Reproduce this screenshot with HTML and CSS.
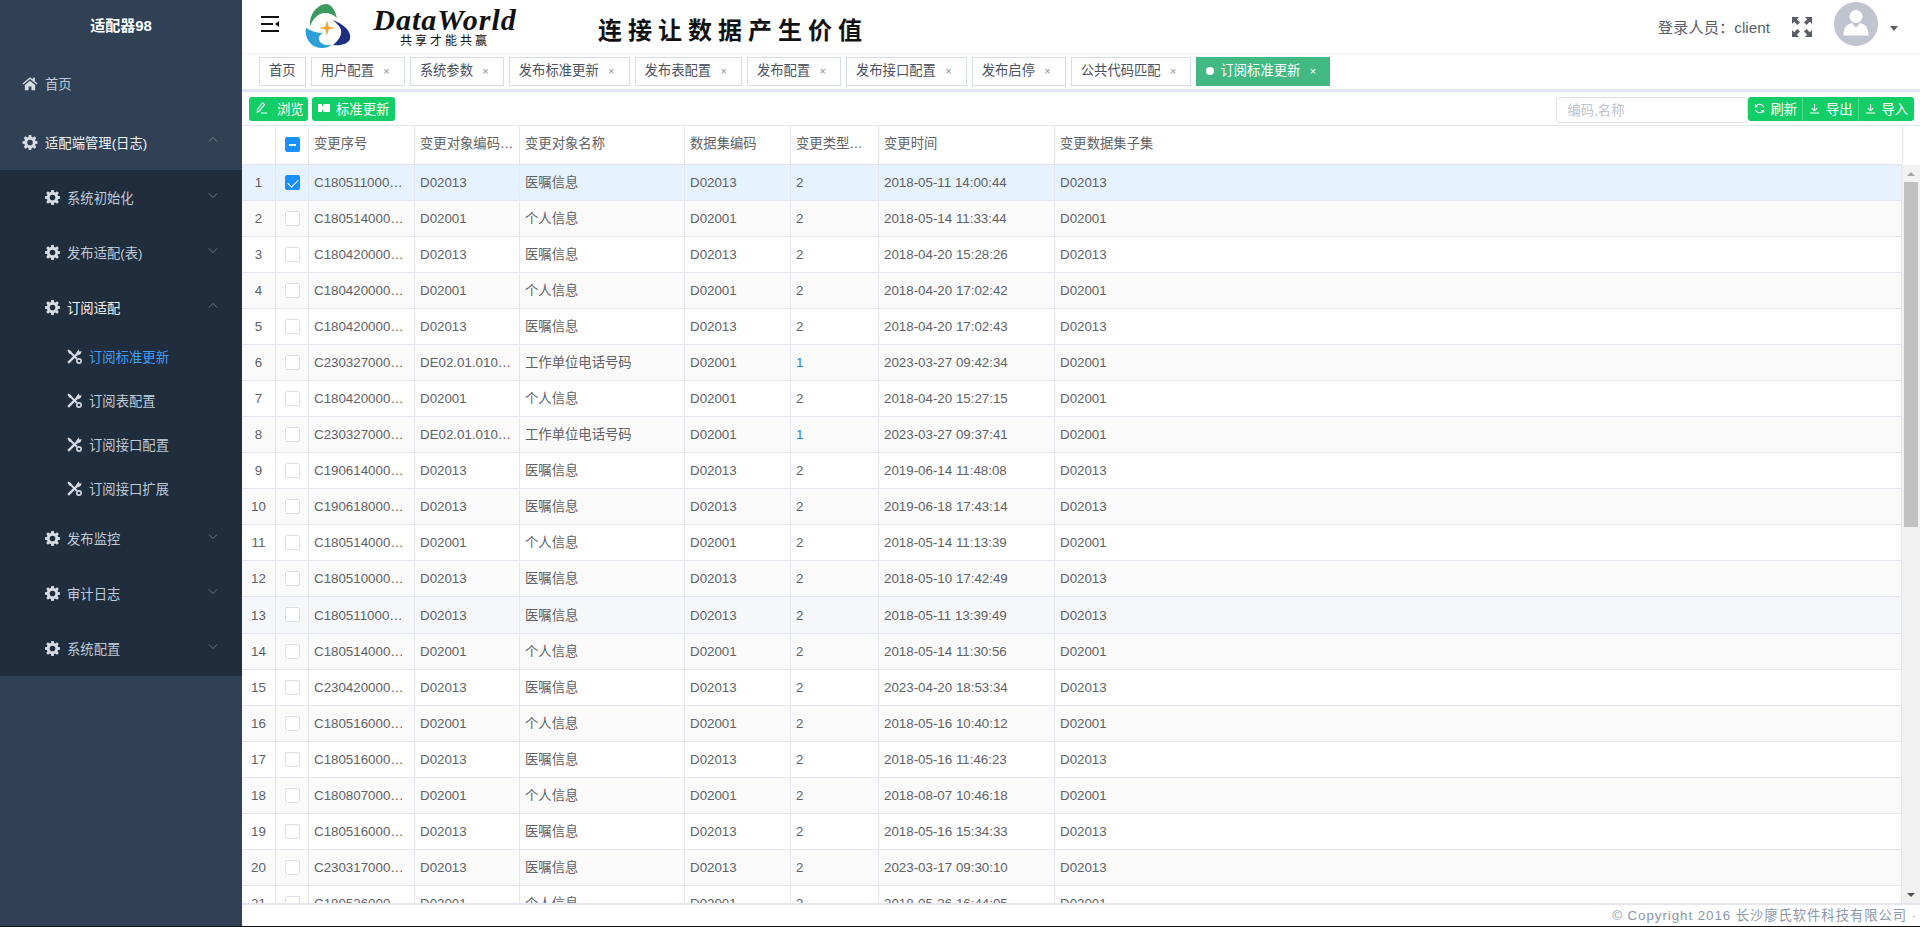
FILE: index.html
```html
<!DOCTYPE html>
<html lang="zh-CN">
<head>
    <meta charset="UTF-8">
    <title>适配器98</title>
    <link rel="stylesheet" href="styles.css">
</head>
<body>

<svg class="icon-defs" width="0" height="0">
    <symbol id="i-gear" viewBox="0 0 16 16">
        <path fill-rule="evenodd" d="M6.7 0h2.6l.4 2.2 1.3.55 1.85-1.3 1.85 1.85-1.3 1.85.55 1.3L16 6.7v2.6l-2.05.4-.55 1.3 1.3 1.85-1.85 1.85-1.85-1.3-1.3.55L9.3 16H6.7l-.4-2.05-1.3-.55-1.85 1.3-1.85-1.85 1.3-1.85-.55-1.3L0 9.3V6.7l2.05-.4.55-1.3-1.3-1.85L3.15 1.3 5 2.6l1.3-.55zM8 5a3 3 0 1 0 0 6 3 3 0 0 0 0-6z"/>
    </symbol>
    <symbol id="i-tools" viewBox="0 0 16 16">
        <path d="M2 2 10.5 10.5" fill="none" stroke="#d8dce2" stroke-width="2.2"/>
        <path d="M.5 1.500 1.500.5l3 1.800.3 1.700-1 1-1.600-.3z" fill="#d8dce2"/>
        <path d="M1.200 14.800 12 4" fill="none" stroke="#d8dce2" stroke-width="2.6"/>
        <path d="M10 4 12.500.3l.6 2.300 2.600-.3-1 2.700-3 1.800z" fill="#d8dce2"/>
        <circle cx="12.800" cy="12.800" r="2.300" fill="none" stroke="#d8dce2" stroke-width="1.700"/>
    </symbol>
    <symbol id="i-chevron" viewBox="0 0 12 8">
        <path d="M1 1.500 6 6.500l5-5" fill="none" stroke="currentColor" stroke-width="1"/>
    </symbol>
    <symbol id="i-download" viewBox="0 0 12 12">
        <path d="M6 1v7M3 5.500 6 8.500l3-3M1 11h10" fill="none" stroke="#fff" stroke-width="1.100"/>
    </symbol>
</svg>

<div class="app">
    <aside class="sidebar">
        <div class="brand">适配器98</div>
        <nav class="menu">
            <a class="menu-top menu-home"><svg class="menu-icon" viewBox="0 0 18 16"><path d="M9 1 .5 8l1 1.200L9 3l7.500 6.200 1-1.200L14.500 5.500V1.500h-2.300v2L9 1zM3.200 9.700V15.500h4.200v-4h3.200v4h4.200V9.700L9 5z"/></svg><span>首页</span></a>
            <a class="menu-top menu-open"><svg class="menu-icon"><use href="#i-gear"/></svg><span>适配端管理(日志)</span><svg class="chev chev-up"><use href="#i-chevron"/></svg></a>
            <div class="submenu">
                <a class="menu-sub"><svg class="menu-icon"><use href="#i-gear"/></svg><span>系统初始化</span><svg class="chev"><use href="#i-chevron"/></svg></a>
                <a class="menu-sub"><svg class="menu-icon"><use href="#i-gear"/></svg><span>发布适配(表)</span><svg class="chev"><use href="#i-chevron"/></svg></a>
                <a class="menu-sub menu-open"><svg class="menu-icon"><use href="#i-gear"/></svg><span>订阅适配</span><svg class="chev chev-up"><use href="#i-chevron"/></svg></a>
                <div class="leaf-list">
                    <a class="menu-leaf leaf-active"><svg class="menu-icon"><use href="#i-tools"/></svg><span>订阅标准更新</span></a>
                    <a class="menu-leaf"><svg class="menu-icon"><use href="#i-tools"/></svg><span>订阅表配置</span></a>
                    <a class="menu-leaf"><svg class="menu-icon"><use href="#i-tools"/></svg><span>订阅接口配置</span></a>
                    <a class="menu-leaf"><svg class="menu-icon"><use href="#i-tools"/></svg><span>订阅接口扩展</span></a>
                </div>
                <a class="menu-sub"><svg class="menu-icon"><use href="#i-gear"/></svg><span>发布监控</span><svg class="chev"><use href="#i-chevron"/></svg></a>
                <a class="menu-sub"><svg class="menu-icon"><use href="#i-gear"/></svg><span>审计日志</span><svg class="chev"><use href="#i-chevron"/></svg></a>
                <a class="menu-sub"><svg class="menu-icon"><use href="#i-gear"/></svg><span>系统配置</span><svg class="chev"><use href="#i-chevron"/></svg></a>
            </div>
        </nav>
    </aside>

    <main class="main">
        <header class="topbar">
            <svg class="hamburger" viewBox="0 0 18 16"><path d="M0 1h18M0 8h12M0 15h18" stroke="#111" stroke-width="1.800" fill="none"/><path d="M18 5v6l-4-3z" fill="#111"/></svg>
            <svg class="logo" viewBox="0 0 47 46">
                <path d="M5 23C4 13 10 3 20 1c6-1 10 6 12 14-3-3-7-5-12-5-7 0-12 6-15 13z" fill="#3c9a5f"/>
                <path d="M1 25c-2 10 5 20 16 20 4 0 7-1 10-3-8 1-14-2-13-8 .5-2 2-3 4-4-6 0-12-2-17-5z" fill="#2a9fd8"/>
                <path d="M28 17c10 4 19 11 17 19-2 5-9 7-17 6 5-4 9-9 8-15-1-4-5-7-8-10z" fill="#1d2f80"/>
                <path d="M22 17l1.600 6.400 6.400 1.600-6.400 1.600L22 33l-1.600-6.400-6.400-1.600 6.400-1.600z" fill="#f0a92e"/>
            </svg>
            <div class="wordmark">
                <span class="wordmark-en">DataWorld</span>
                <span class="wordmark-cn">共享才能共赢</span>
            </div>
            <div class="slogan">连接让数据产生价值</div>
            <div class="topbar-right">
                <span class="login-user">登录人员：client</span>
                <svg class="fullscreen" viewBox="0 0 20 20"><path d="M0 0h7L4.800 2.200 8 5.400 5.400 8 2.200 4.800 0 7zM20 0v7l-2.200-2.200L14.600 8 12 5.400l3.200-3.200L13 0zM0 20v-7l2.200 2.200L5.400 12 8 14.600l-3.200 3.200L7 20zM20 20h-7l2.200-2.200L12 14.600l2.600-2.600 3.200 3.200L20 13z" fill="#5a5e66"/></svg>
                <div class="avatar"><svg viewBox="0 0 44 44"><circle cx="22" cy="14.500" r="6.500" fill="#fff"/><path d="M9.500 33.500c0-8 3-11 8-12.500l4.500 4.500 4.500-4.500c5 1.500 8 4.500 8 12.500z" fill="#fff"/></svg></div>
                <span class="caret"></span>
            </div>
        </header>

        <div class="tabs">
            <a class="tab">首页</a>
            <a class="tab">用户配置<i>×</i></a>
            <a class="tab">系统参数<i>×</i></a>
            <a class="tab">发布标准更新<i>×</i></a>
            <a class="tab">发布表配置<i>×</i></a>
            <a class="tab">发布配置<i>×</i></a>
            <a class="tab">发布接口配置<i>×</i></a>
            <a class="tab">发布启停<i>×</i></a>
            <a class="tab">公共代码匹配<i>×</i></a>
            <a class="tab tab-active"><b></b>订阅标准更新<i>×</i></a>
        </div>

        <section class="content">
            <div class="toolbar">
                <button class="btn btn-view"><svg viewBox="0 0 12 12"><path d="M7.500 1 9.500 2.500 4.500 9 2.300 10l.2-2.500zM6 11h6" fill="none" stroke="#fff" stroke-width="1.100"/></svg>浏览</button>
                <button class="btn btn-update"><svg viewBox="0 0 12 10"><path d="M0 1h4v2h1V1h7v8H5V7H4v2H0z" fill="#fff"/></svg>标准更新</button>
                <input class="search" type="text" placeholder="编码,名称">
                <div class="btn-group">
                    <button class="btn"><svg viewBox="0 0 12 12"><path d="M10.500 4.500A4.800 4.800 0 0 0 2 3.500M1.500 7.500A4.800 4.800 0 0 0 10 8.500" fill="none" stroke="#fff" stroke-width="1.300"/><path d="M1 1v3.500h3.500zM11 11V7.500H7.500z" fill="#fff"/></svg>刷新</button>
                    <button class="btn"><svg><use href="#i-download"/></svg>导出</button>
                    <button class="btn"><svg><use href="#i-download"/></svg>导入</button>
                </div>
            </div>

            <div class="grid-head">
                <table class="grid">
                    <colgroup><col class="c-no"><col class="c-check"><col class="c-seq"><col class="c-code"><col class="c-name"><col class="c-set"><col class="c-type"><col class="c-time"><col class="c-sub"></colgroup>
                    <tr>
                        <th></th>
                        <th class="cell-check"><span class="checkbox is-mixed"></span></th>
                        <th>变更序号</th>
                        <th>变更对象编码…</th>
                        <th>变更对象名称</th>
                        <th>数据集编码</th>
                        <th>变更类型…</th>
                        <th>变更时间</th>
                        <th>变更数据集子集</th>
                    </tr>
                </table>
            </div>

            <div class="grid-wrap">
                <div class="grid-body">
                    <table class="grid">
                        <colgroup><col class="c-no"><col class="c-check"><col class="c-seq"><col class="c-code"><col class="c-name"><col class="c-set"><col class="c-type"><col class="c-time"><col class="c-sub"></colgroup>
                        <tr class="row-selected"><td class="cell-no">1</td><td class="cell-check"><span class="checkbox is-checked"></span></td><td>C180511000…</td><td>D02013</td><td class="cell-cn">医嘱信息</td><td>D02013</td><td>2</td><td>2018-05-11 14:00:44</td><td>D02013</td></tr>
                        <tr><td class="cell-no">2</td><td class="cell-check"><span class="checkbox"></span></td><td>C180514000…</td><td>D02001</td><td class="cell-cn">个人信息</td><td>D02001</td><td>2</td><td>2018-05-14 11:33:44</td><td>D02001</td></tr>
                        <tr><td class="cell-no">3</td><td class="cell-check"><span class="checkbox"></span></td><td>C180420000…</td><td>D02013</td><td class="cell-cn">医嘱信息</td><td>D02013</td><td>2</td><td>2018-04-20 15:28:26</td><td>D02013</td></tr>
                        <tr><td class="cell-no">4</td><td class="cell-check"><span class="checkbox"></span></td><td>C180420000…</td><td>D02001</td><td class="cell-cn">个人信息</td><td>D02001</td><td>2</td><td>2018-04-20 17:02:42</td><td>D02001</td></tr>
                        <tr><td class="cell-no">5</td><td class="cell-check"><span class="checkbox"></span></td><td>C180420000…</td><td>D02013</td><td class="cell-cn">医嘱信息</td><td>D02013</td><td>2</td><td>2018-04-20 17:02:43</td><td>D02013</td></tr>
                        <tr><td class="cell-no">6</td><td class="cell-check"><span class="checkbox"></span></td><td>C230327000…</td><td>DE02.01.010…</td><td class="cell-cn">工作单位电话号码</td><td>D02001</td><td class="type-new">1</td><td>2023-03-27 09:42:34</td><td>D02001</td></tr>
                        <tr><td class="cell-no">7</td><td class="cell-check"><span class="checkbox"></span></td><td>C180420000…</td><td>D02001</td><td class="cell-cn">个人信息</td><td>D02001</td><td>2</td><td>2018-04-20 15:27:15</td><td>D02001</td></tr>
                        <tr><td class="cell-no">8</td><td class="cell-check"><span class="checkbox"></span></td><td>C230327000…</td><td>DE02.01.010…</td><td class="cell-cn">工作单位电话号码</td><td>D02001</td><td class="type-new">1</td><td>2023-03-27 09:37:41</td><td>D02001</td></tr>
                        <tr><td class="cell-no">9</td><td class="cell-check"><span class="checkbox"></span></td><td>C190614000…</td><td>D02013</td><td class="cell-cn">医嘱信息</td><td>D02013</td><td>2</td><td>2019-06-14 11:48:08</td><td>D02013</td></tr>
                        <tr><td class="cell-no">10</td><td class="cell-check"><span class="checkbox"></span></td><td>C190618000…</td><td>D02013</td><td class="cell-cn">医嘱信息</td><td>D02013</td><td>2</td><td>2019-06-18 17:43:14</td><td>D02013</td></tr>
                        <tr><td class="cell-no">11</td><td class="cell-check"><span class="checkbox"></span></td><td>C180514000…</td><td>D02001</td><td class="cell-cn">个人信息</td><td>D02001</td><td>2</td><td>2018-05-14 11:13:39</td><td>D02001</td></tr>
                        <tr><td class="cell-no">12</td><td class="cell-check"><span class="checkbox"></span></td><td>C180510000…</td><td>D02013</td><td class="cell-cn">医嘱信息</td><td>D02013</td><td>2</td><td>2018-05-10 17:42:49</td><td>D02013</td></tr>
                        <tr class="row-hover"><td class="cell-no">13</td><td class="cell-check"><span class="checkbox"></span></td><td>C180511000…</td><td>D02013</td><td class="cell-cn">医嘱信息</td><td>D02013</td><td>2</td><td>2018-05-11 13:39:49</td><td>D02013</td></tr>
                        <tr><td class="cell-no">14</td><td class="cell-check"><span class="checkbox"></span></td><td>C180514000…</td><td>D02001</td><td class="cell-cn">个人信息</td><td>D02001</td><td>2</td><td>2018-05-14 11:30:56</td><td>D02001</td></tr>
                        <tr><td class="cell-no">15</td><td class="cell-check"><span class="checkbox"></span></td><td>C230420000…</td><td>D02013</td><td class="cell-cn">医嘱信息</td><td>D02013</td><td>2</td><td>2023-04-20 18:53:34</td><td>D02013</td></tr>
                        <tr><td class="cell-no">16</td><td class="cell-check"><span class="checkbox"></span></td><td>C180516000…</td><td>D02001</td><td class="cell-cn">个人信息</td><td>D02001</td><td>2</td><td>2018-05-16 10:40:12</td><td>D02001</td></tr>
                        <tr><td class="cell-no">17</td><td class="cell-check"><span class="checkbox"></span></td><td>C180516000…</td><td>D02013</td><td class="cell-cn">医嘱信息</td><td>D02013</td><td>2</td><td>2018-05-16 11:46:23</td><td>D02013</td></tr>
                        <tr><td class="cell-no">18</td><td class="cell-check"><span class="checkbox"></span></td><td>C180807000…</td><td>D02001</td><td class="cell-cn">个人信息</td><td>D02001</td><td>2</td><td>2018-08-07 10:46:18</td><td>D02001</td></tr>
                        <tr><td class="cell-no">19</td><td class="cell-check"><span class="checkbox"></span></td><td>C180516000…</td><td>D02013</td><td class="cell-cn">医嘱信息</td><td>D02013</td><td>2</td><td>2018-05-16 15:34:33</td><td>D02013</td></tr>
                        <tr><td class="cell-no">20</td><td class="cell-check"><span class="checkbox"></span></td><td>C230317000…</td><td>D02013</td><td class="cell-cn">医嘱信息</td><td>D02013</td><td>2</td><td>2023-03-17 09:30:10</td><td>D02013</td></tr>
                        <tr><td class="cell-no">21</td><td class="cell-check"><span class="checkbox"></span></td><td>C180526000…</td><td>D02001</td><td class="cell-cn">个人信息</td><td>D02001</td><td>2</td><td>2018-05-26 16:44:05</td><td>D02001</td></tr>
                    </table>
                </div>
                <div class="scrollbar">
                    <span class="arrow arrow-up"></span>
                    <span class="thumb"></span>
                    <span class="arrow arrow-down"></span>
                </div>
            </div>
        </section>

        <footer class="footer">© Copyright 2016 长沙廖氏软件科技有限公司 ·</footer>
    </main>
</div>

</body>
</html>
```

FILE: styles.css
```css
* {
    box-sizing: border-box;
}
html, body {
    height: 100%;
}
body {
    margin: 0;
    font-family: "Liberation Sans", Arial, "Noto Sans CJK SC", sans-serif;
    font-size: 13.33px;
    color: #606266;
    background-color: #111;
    overflow: hidden;
}
.icon-defs {
    position: absolute;
}
.app {
    display: flex;
    height: 926px;
}

/* sidebar */
.sidebar {
    width: 242px;
    flex: none;
    background-color: #304156;
    color: #bfcbd9;
}
.brand {
    height: 55px;
    line-height: 51px;
    text-align: center;
    color: #fff;
    font-size: 15px;
    font-weight: bold;
}
.menu a {
    display: flex;
    align-items: center;
    position: relative;
}
.menu-top {
    height: 57px;
    padding: 1px 0 0 22px;
}
.menu-home {
    height: 58px;
    padding: 0 0 2px 22px;
}
.menu-sub {
    height: 55px;
    padding-left: 45px;
}
.menu-leaf {
    height: 44px;
    padding: 0 0 2px 67px;
}
.menu-icon {
    width: 15px;
    height: 15px;
    margin-right: 7px;
    fill: #d8dce2;
    flex: none;
}
.menu-top .menu-icon {
    width: 16px;
}
.menu-open {
    color: #f4f4f5;
}
.submenu {
    background-color: #1f2d3d;
}
.leaf-active {
    color: #409eff;
}
.chev {
    position: absolute;
    right: 24px;
    top: 50%;
    width: 10px;
    height: 7px;
    margin-top: -6px;
    color: #7f8a98;
}
.chev-up {
    transform: rotate(180deg);
}

/* top bar */
.main {
    flex: 1;
    min-width: 0;
    display: flex;
    flex-direction: column;
    background-color: #fff;
}
.topbar {
    height: 53px;
    flex: none;
    display: flex;
    align-items: center;
    padding-left: 19px;
    box-shadow: 0 1px 4px rgba(0, 21, 41, 0.08);
    position: relative;
}
.hamburger {
    width: 18px;
    height: 16px;
    margin: 0 26px 6px 0;
}
.logo {
    width: 47px;
    height: 46px;
    margin: 0 22px 2px 0;
}
.wordmark {
    display: flex;
    flex-direction: column;
    align-items: center;
    width: 142px;
    color: #111;
    margin-right: 82px;
}
.wordmark-en {
    font-family: "Liberation Serif", serif;
    font-style: italic;
    font-weight: bold;
    font-size: 30px;
    letter-spacing: 1px;
    line-height: 28px;
    white-space: nowrap;
}
.wordmark-cn {
    font-size: 12px;
    line-height: 14px;
    letter-spacing: 3px;
}
.slogan {
    font-family: "Noto Sans CJK SC", sans-serif;
    font-size: 24px;
    font-weight: bold;
    line-height: 30px;
    letter-spacing: 6px;
    color: #111;
    margin-top: 5px;
}
.topbar-right {
    margin-left: auto;
    display: flex;
    align-items: center;
    padding-right: 22px;
}
.login-user {
    font-size: 15.3px;
    color: #5a5e66;
    margin: 0 22px 2px 0;
}
.fullscreen {
    width: 20px;
    height: 20px;
    margin-right: 22px;
}
.avatar {
    width: 44px;
    height: 44px;
    border-radius: 50%;
    background-color: #c0c4cf;
    margin: 0 12px 5px 0;
}
.avatar svg {
    display: block;
}
.caret {
    border: 4px solid transparent;
    border-top: 5px solid #5a5e66;
    border-bottom: 0;
    width: 0;
    height: 0;
    margin-top: 4px;
}

/* tabs */
.tabs {
    height: 39px;
    flex: none;
    display: flex;
    align-items: flex-start;
    gap: 5px;
    padding: 4px 0 0 17px;
    border-bottom: 3px solid #e2e6f0;
}
.tab {
    height: 29px;
    line-height: 26px;
    border: 1px solid #d8dce5;
    padding: 0 9px;
    color: #495060;
    white-space: nowrap;
}
.tab i {
    display: inline-block;
    width: 9px;
    text-align: center;
    font-style: normal;
    font-size: 11px;
    color: #8a8f99;
    margin: 0 3.75px 0 8px;
}
.tab-active {
    background-color: #42b983;
    border-color: #42b983;
    color: #fff;
}
.tab-active b {
    display: inline-block;
    width: 8px;
    height: 8px;
    border-radius: 50%;
    background-color: #fff;
    margin-right: 6px;
}
.tab-active i {
    color: #fff;
    margin-right: 3px;
}

/* toolbar */
.content {
    flex: 1;
    min-height: 0;
    display: flex;
    flex-direction: column;
    border-bottom: 2px solid #e4e7ed;
}
.toolbar {
    height: 33px;
    flex: none;
    display: flex;
    align-items: flex-start;
    padding: 5px 6px 0 7px;
    gap: 4px;
}
.btn {
    height: 24px;
    border: 0;
    border-radius: 3px;
    background-color: #13ce66;
    color: #fff;
    font-family: inherit;
    font-size: 13.33px;
    padding: 0 6px 2px;
    display: inline-flex;
    align-items: center;
    white-space: nowrap;
}
.btn svg {
    width: 12px;
    height: 12px;
    flex: none;
}
.btn-view {
    width: 59px;
    gap: 10px;
}
.btn-update {
    width: 83px;
    gap: 6px;
}
.search {
    width: 192px;
    height: 26px;
    margin-left: auto;
    margin-right: -4px;
    border: 1px solid #dcdfe6;
    border-radius: 4px;
    padding: 0 11px;
    font-family: inherit;
    font-size: 13.33px;
    outline: none;
}
.search::placeholder {
    color: #c0c4cc;
}
.btn-group {
    display: flex;
}
.btn-group .btn {
    border-radius: 0;
    border-right: 1px solid #4fdd8e;
    width: 55.5px;
    gap: 6px;
}
.btn-group .btn svg {
    width: 11px;
    height: 11px;
}
.btn-group .btn:first-child {
    border-radius: 3px 0 0 3px;
}
.btn-group .btn:last-child {
    border-radius: 0 3px 3px 0;
    border-right: 0;
}

/* table */
.grid-head {
    flex: none;
    border-top: 1px solid #e4e7ed;
    padding-right: 17px;
}
.grid {
    width: 100%;
    table-layout: fixed;
    border-collapse: separate;
    border-spacing: 0;
    font-size: 13.33px;
}
.c-no { width: 34px; }
.c-check { width: 33px; }
.c-seq { width: 106px; }
.c-code { width: 105px; }
.c-name { width: 165px; }
.c-set { width: 106px; }
.c-type { width: 88px; }
.c-time { width: 176px; }
.grid th, .grid td {
    border-right: 1px solid #e4e7ed;
    border-bottom: 1px solid #e4e7ed;
    padding: 0 5px;
    text-align: left;
    font-weight: normal;
    white-space: nowrap;
    overflow: hidden;
    color: #606266;
}
.grid th {
    height: 39px;
    padding-bottom: 5px;
}
.grid td {
    height: 36px;
}
.grid .cell-cn {
    padding-bottom: 2px;
}
.grid .cell-no {
    text-align: center;
}
.grid .cell-check {
    padding: 0 0 1px;
}
.grid .type-new {
    color: #2d7fc9;
}
.grid tr:nth-child(even) td {
    background-color: #fafafa;
}
.grid .row-selected td {
    background-color: #e6f2fd;
}
.grid .row-hover td {
    height: 37px;
    background-color: #f5f7fa;
}
.checkbox {
    display: block;
    width: 15px;
    height: 15px;
    margin: 0 auto;
    border: 1px solid #dcdfe6;
    border-radius: 2px;
    background-color: #fff;
    position: relative;
}
.checkbox.is-mixed, .checkbox.is-checked {
    background-color: #1890ff;
    border-color: #1890ff;
}
.checkbox.is-mixed::after {
    content: "";
    position: absolute;
    left: 3px;
    top: 6px;
    width: 7px;
    height: 1.5px;
    background-color: #fff;
}
.checkbox.is-checked::after {
    content: "";
    position: absolute;
    left: 4px;
    top: 1px;
    width: 5px;
    height: 9px;
    border: 1px solid #fff;
    border-width: 0 1px 1px 0;
    transform: rotate(45deg);
}
.grid-wrap {
    flex: 1;
    min-height: 0;
    display: flex;
}
.grid-body {
    flex: 1;
    min-width: 0;
    overflow: hidden;
}
.scrollbar {
    width: 18px;
    flex: none;
    background-color: #f1f1f1;
    display: flex;
    flex-direction: column;
    align-items: center;
}
.arrow {
    flex: none;
    width: 0;
    height: 0;
    border: 4px solid transparent;
}
.arrow-up {
    border-bottom: 4px solid #a3a3a3;
    border-top: 0;
    margin: 7px 0 6px;
}
.arrow-down {
    border-top: 4px solid #505050;
    border-bottom: 0;
    margin: auto 0 6px;
}
.thumb {
    width: 14px;
    height: 345px;
    background-color: #c1c1c1;
}

.footer {
    height: 21px;
    flex: none;
    line-height: 21px;
    text-align: right;
    padding-right: 3px;
    font-size: 13.33px;
    letter-spacing: 0.94px;
    color: #8a97a8;
    white-space: nowrap;
}
```
